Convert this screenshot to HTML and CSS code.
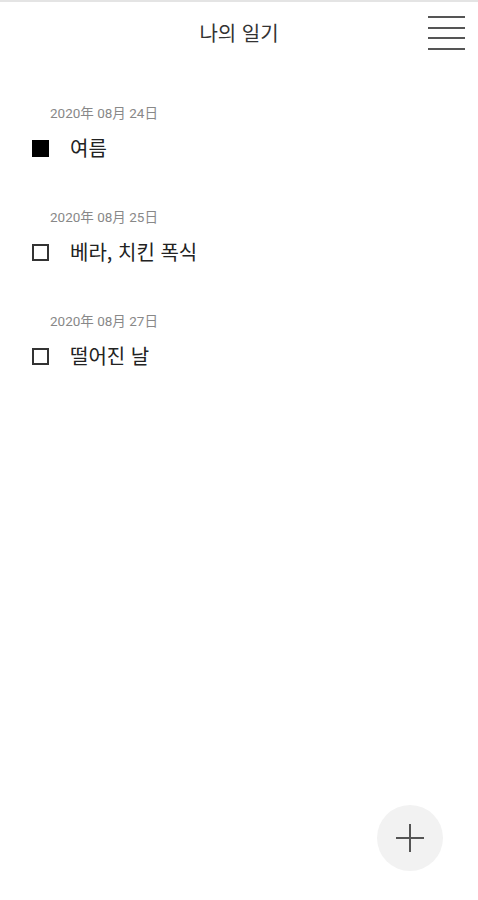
FILE: index.html
```html
<!DOCTYPE html>
<html lang="ko">
<head>
    <meta charset="UTF-8">
    <meta name="viewport" content="width=device-width, initial-scale=1.0">
    <title>나의 일기</title>
    <link rel="stylesheet" href="styles.css">
</head>
<body>
    <div class="header">
        <h1 class="title">나의 일기</h1>
        <button class="menu-btn" aria-label="메뉴">
            <span></span><span></span><span></span><span></span>
        </button>
    </div>

    <div class="diary-list">
        <div class="diary-group">
            <div class="diary-date">2020年 08月 24日</div>
            <div class="diary-item">
                <span class="check checked"></span>
                <span class="diary-title">여름</span>
            </div>
        </div>
        <div class="diary-group">
            <div class="diary-date">2020年 08月 25日</div>
            <div class="diary-item">
                <span class="check"></span>
                <span class="diary-title">베라, 치킨 폭식</span>
            </div>
        </div>
        <div class="diary-group">
            <div class="diary-date">2020年 08月 27日</div>
            <div class="diary-item">
                <span class="check"></span>
                <span class="diary-title">떨어진 날</span>
            </div>
        </div>
    </div>

    <button class="add-btn" aria-label="추가">
        <svg width="30" height="30" viewBox="0 0 30 30">
            <path d="M15 1 V29 M1 15 H29" stroke="#555" stroke-width="2" fill="none"/>
        </svg>
    </button>
</body>
</html>
```

FILE: styles.css
```css
* {
    margin: 0;
    padding: 0;
    box-sizing: border-box;
}

body {
    font-family: Roboto, 'Noto Sans CJK KR', sans-serif;
    background: #fff;
    min-height: 100vh;
    position: relative;
}

.header {
    height: 66px;
    border-top: 2px solid #e4e4e4;
    display: flex;
    justify-content: center;
    align-items: center;
    position: relative;
}

.title {
    font-family: 'Noto Sans CJK KR', sans-serif;
    font-size: 20px;
    line-height: 28px;
    margin-top: -2px;
    font-weight: 400;
    color: #333;
}

.menu-btn {
    position: absolute;
    top: 13px;
    right: 13px;
    width: 37px;
    height: 36px;
    background: none;
    border: none;
    display: flex;
    flex-direction: column;
    justify-content: space-between;
    padding: 1px 0;
}

.menu-btn span {
    display: block;
    height: 2px;
    background: #555;
}

.diary-list {
    padding-top: 39px;
}

.diary-group {
    margin-bottom: 47px;
}

.diary-date {
    padding-left: 50px;
    font-size: 13.5px;
    line-height: 16px;
    color: #888;
}

.diary-item {
    display: flex;
    align-items: center;
    height: 28px;
    margin-top: 13px;
    padding-left: 32px;
    gap: 21px;
}

.check {
    width: 17px;
    height: 17px;
    border: 2px solid #333;
}

.check.checked {
    background: #000;
    border-color: #000;
}

.diary-title {
    font-family: 'Noto Sans CJK KR', sans-serif;
    font-size: 20px;
    line-height: 28px;
    color: #222;
}

.add-btn {
    position: absolute;
    right: 35px;
    bottom: 29px;
    width: 66px;
    height: 66px;
    border-radius: 50%;
    border: none;
    background: #f2f2f2;
    display: flex;
    justify-content: center;
    align-items: center;
}
```
